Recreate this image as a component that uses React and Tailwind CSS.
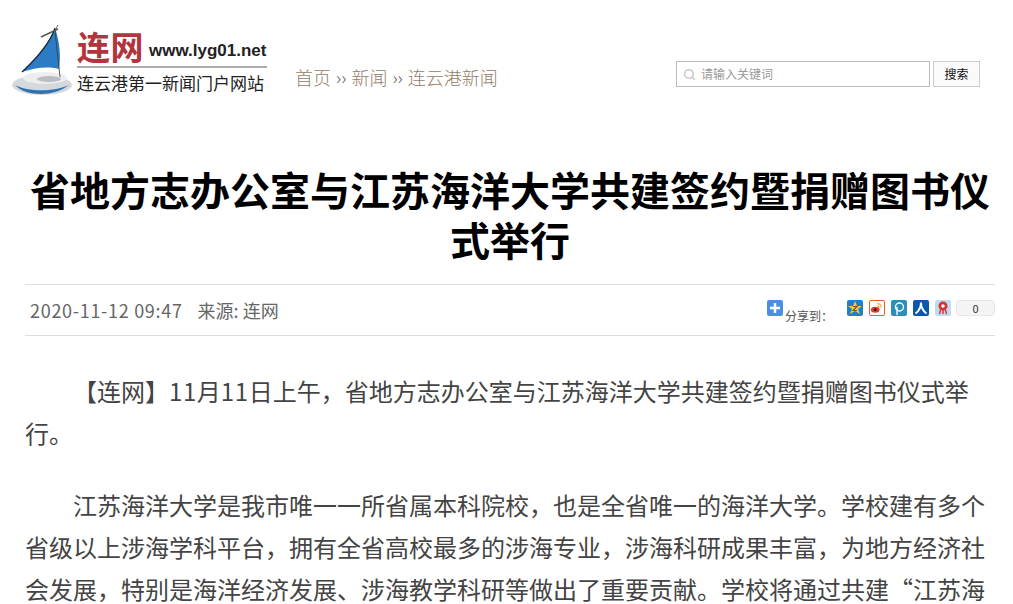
import { Search } from 'lucide-react';

const cjk = '"Noto Sans CJK SC", sans-serif';

function Logo() {
  return (
    <div className="flex items-start w-[255px] h-[74px]">
      <svg className="w-[65px] h-[74px] shrink-0" viewBox="0 0 65 74">
        <ellipse cx="30" cy="60" rx="30" ry="10" fill="#d5d9dc" />
        <path d="M3 60 C14 72 42 72 57 60 C42 67 16 67 3 60Z" fill="#2f72b0" />
        <ellipse cx="33" cy="53" rx="22" ry="6" fill="#eceef0" />
        <ellipse cx="37" cy="54" rx="12" ry="3" fill="#b9bec2" />
        <path d="M10 47 C25 33 38 18 43 3 C48 18 49 32 47 44 C34 41 22 43 10 47Z" fill="#2b7cc4" />
        <path d="M10 47 C25 33 38 18 43 3" stroke="#15283c" strokeWidth="1.3" fill="none" />
        <path d="M46 0 L43 6 L48 52" stroke="#3a3a3a" strokeWidth="0.8" fill="none" />
        <path d="M29 12 L46 4" stroke="#555" strokeWidth="1.4" />
      </svg>
      <div className="w-[190px] pt-[2px]">
        <div className="flex items-end h-[41px] border-b-2 border-[#a9adb0] pb-[2px]">
          <span className="text-[33px] leading-[36px] font-bold text-[#b2343c] whitespace-nowrap tracking-[0.5px]">连网</span>
          <span className="ml-[5px] mb-[2px] text-[17px] leading-[22px] font-bold text-[#222] [font-family:'Liberation_Sans',sans-serif] whitespace-nowrap">
            www.lyg01.net
          </span>
        </div>
        <div className="mt-[3px] text-[17px] leading-[24px] text-[#222] whitespace-nowrap">连云港第一新闻门户网站</div>
      </div>
    </div>
  );
}

function ShareIcon({ bg, children }) {
  return (
    <span className={`w-4 h-4 rounded-[2px] flex items-center justify-center overflow-hidden ${bg}`}>
      <svg className="w-4 h-4" viewBox="0 0 16 16">{children}</svg>
    </span>
  );
}

export default function App() {
  return (
    <div className="w-[1013px] h-[604px] overflow-hidden bg-white" style={{ fontFamily: cjk }}>
      {/* Header */}
      <div className="flex pl-[12px] pr-[33px] pt-[25px] h-[105px]">
        <Logo />
        <div className="ml-[28px] mt-[39px] flex text-[18px] leading-[26px] font-light text-[#94806a] whitespace-nowrap">
          首页<span className="mx-[5px] text-[#555]">››</span>新闻<span className="mx-[5px] text-[#555]">››</span>连云港新闻
        </div>
        <div className="ml-auto mt-[36px] flex gap-[3px] h-[26px]">
          <div className="w-[254px] border border-[#bbb] flex items-center pl-[6px] gap-[5px]">
            <Search className="w-[13px] h-[13px] text-[#ccc]" strokeWidth={3} />
            <span className="text-[12px] text-[#999]">请输入关键词</span>
          </div>
          <button className="w-[47px] border border-[#ccc] bg-[#fafafa] text-[12px] text-[#111]">搜索</button>
        </div>
      </div>

      <div className="ml-[25px] w-[970px]">
        {/* Title */}
        <h1 className="mt-[59px] text-[40px] leading-[50px] font-bold text-center text-black">
          省地方志办公室与江苏海洋大学共建签约暨捐赠图书仪式举行
        </h1>

        {/* Meta */}
        <div className="mt-[20px] h-[52px] border-y border-[#ddd] flex items-center justify-between pl-[5px]">
          <div className="text-[18px] text-[#666] whitespace-nowrap">
            <span className="tracking-[0.7px]">2020-11-12 09:47</span>
            <span className="ml-[15px]">来源: 连网</span>
          </div>
          <div className="flex items-center text-[12px] text-[#555]">
            <ShareIcon bg="bg-[#4a90e2] -mt-[4px]">
              <path d="M3 8h10M8 3v10" stroke="#fff" strokeWidth="2.5" />
            </ShareIcon>
            <span className="mt-[12px] ml-[2px] mr-[14px]">分享到：</span>
            <span className="flex items-center gap-[6px] -mt-[4px]">
              <ShareIcon bg="bg-[#1f7fcf]">
                <path d="M8 1l2 5h5l-4 3 2 5-5-3-5 3 2-5-4-3h5z" fill="#f7c92e" />
                <path d="M6 6.5h4L6 10.5h4" stroke="#7a5a10" strokeWidth="1.1" fill="none" />
              </ShareIcon>
              <ShareIcon bg="bg-white border border-[#e0602a]">
                <ellipse cx="6" cy="10" rx="5" ry="3.5" fill="#e33" />
                <circle cx="6" cy="10" r="1.6" fill="#222" />
                <path d="M8.5 3a4.5 4.5 0 0 1 4.5 4.5M8.5 5.5a2 2 0 0 1 2 2" stroke="#f90" strokeWidth="1.3" fill="none" />
              </ShareIcon>
              <ShareIcon bg="bg-[#2a8fb8]">
                <circle cx="8.5" cy="7" r="4" stroke="#fff" strokeWidth="1.4" fill="none" />
                <path d="M6 15V7" stroke="#fff" strokeWidth="1.4" />
              </ShareIcon>
              <ShareIcon bg="bg-[#0b57a8]">
                <path d="M8 2.5C8 7 6 11 2.5 13.5M8 2.5c0 4.5 2 8.500 5.500 11" stroke="#fff" strokeWidth="2" fill="none" />
              </ShareIcon>
              <ShareIcon bg="bg-[#bcdcf2]">
                <circle cx="8" cy="6" r="4.500" fill="#d9322e" />
                <circle cx="8" cy="6" r="1.800" fill="#fff" />
                <path d="M5.500 10l-1 4M8 10v4M10.500 10l1 4" stroke="#d9322e" strokeWidth="1.400" />
              </ShareIcon>
              <span className="ml-[-1px] w-[39px] h-[16px] rounded-[4px] border border-[#e8e8e8] bg-[#f4f4f4] text-[11px] leading-[14px] text-center text-[#333]">
                0
              </span>
            </span>
          </div>
        </div>

        {/* Article */}
        <div className="mt-[34px] text-[24px] leading-[42px] text-[#444] [&>p]:indent-[48px] [&>p]:mb-[30px]">
          <p>
            【连网】<span className="tracking-[0.6px]">11</span>月<span className="tracking-[0.6px]">11</span>日上午，省地方志办公室与江苏海洋大学共建签约暨捐赠图书仪式举行。
          </p>
          <p>
            江苏海洋大学是我市唯一一所省属本科院校，也是全省唯一的海洋大学。学校建有多个省级以上涉海学科平台，拥有全省高校最多的涉海专业，涉海科研成果丰富，为地方经济社会发展，特别是海洋经济发展、涉海教学科研等做出了重要贡献。学校将通过共建“江苏海
          </p>
        </div>
      </div>
    </div>
  );
}
